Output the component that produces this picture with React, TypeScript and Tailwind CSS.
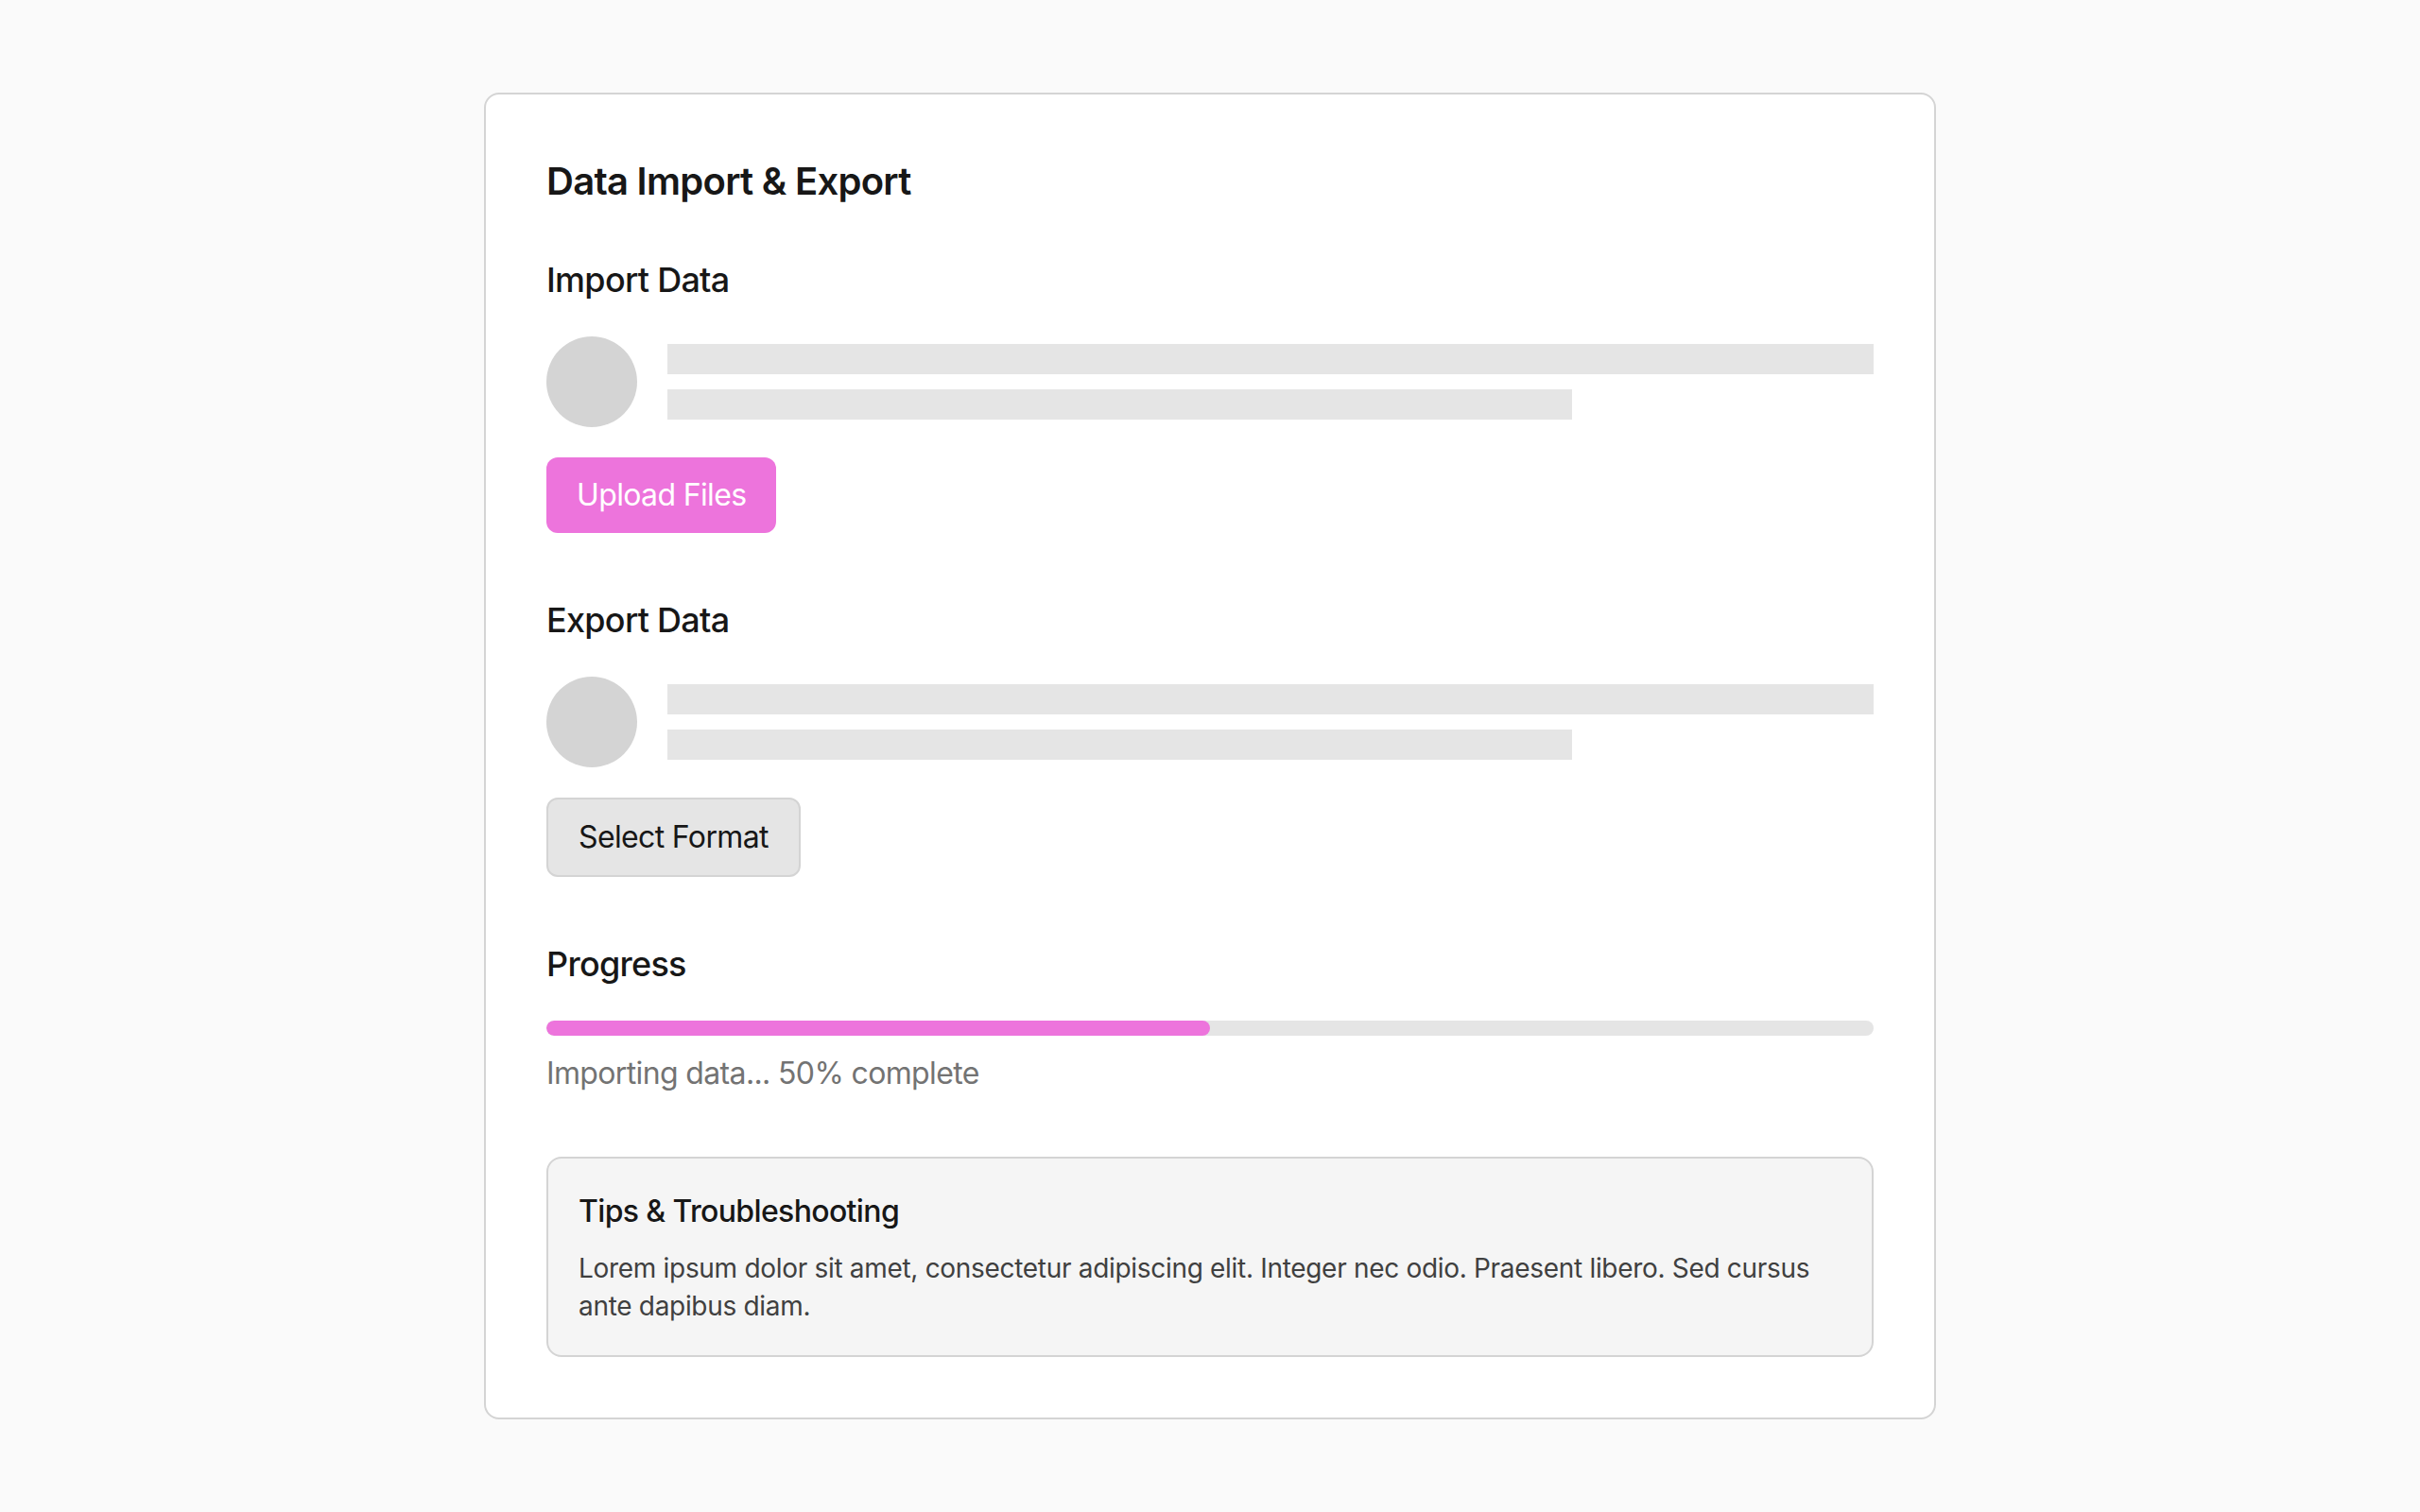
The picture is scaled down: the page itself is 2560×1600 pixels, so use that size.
import React from "react";

function Skeleton() {
  return (
    <div className="flex items-center gap-[32px]">
      <div className="h-[96px] w-[96px] shrink-0 rounded-full bg-[#d4d4d4]" />
      <div className="flex flex-1 flex-col gap-[16px]">
        <div className="h-[32px] w-full bg-[#e5e5e5]" />
        <div className="h-[32px] w-3/4 bg-[#e5e5e5]" />
      </div>
    </div>
  );
}

export default function App() {
  const progress = 50;
  return (
    <div className="min-h-screen bg-[#fafafa] pt-[98px] pb-[96px] font-['Inter',sans-serif] text-[#171717]">
      <div className="mx-auto w-[1536px] rounded-[16px] border-2 border-[#d4d4d4] bg-white p-[64px]">
        <h1 className="mb-[48px] text-[40px] leading-[56px] font-semibold tracking-[-0.018em]">Data Import &amp; Export</h1>

        <div className="flex flex-col gap-[64px]">
          <section>
            <h2 className="mb-[32px] text-[36px] leading-[56px] font-medium tracking-[-0.02em]">Import Data</h2>
            <Skeleton />
            <button className="mt-[32px] rounded-[12px] bg-[#ed74dc] px-[32px] py-[16px] text-[32px] leading-[48px] tracking-[-0.02em] text-white">
              Upload Files
            </button>
          </section>

          <section>
            <h2 className="mb-[32px] text-[36px] leading-[56px] font-medium tracking-[-0.02em]">Export Data</h2>
            <Skeleton />
            <button className="mt-[32px] rounded-[12px] border-2 border-[#d4d4d4] bg-[#e5e5e5] px-[32px] py-[16px] text-[32px] leading-[48px] tracking-[-0.02em] text-[#171717]">
              Select Format
            </button>
          </section>

          <section>
            <h2 className="mb-[32px] text-[36px] leading-[56px] font-medium tracking-[-0.02em]">Progress</h2>
            <div className="h-[16px] w-full overflow-hidden rounded-full bg-[#e5e5e5]">
              <div className="h-full rounded-full bg-[#ed74dc]" style={{ width: `${progress}%` }} />
            </div>
            <p className="mt-[16px] text-[32px] leading-[48px] tracking-[-0.02em] text-[#737373]">Importing data... {progress}% complete</p>
          </section>
        </div>

        <div className="mt-[64px] rounded-[16px] border-2 border-[#d4d4d4] bg-[#f5f5f5] p-[32px]">
          <h3 className="text-[32px] leading-[48px] font-medium tracking-[-0.02em]">Tips &amp; Troubleshooting</h3>
          <p className="mt-[16px] text-[28px] leading-[40px] tracking-[-0.011em] text-[#404040]">
            Lorem ipsum dolor sit amet, consectetur adipiscing elit. Integer nec odio. Praesent libero. Sed cursus ante dapibus diam.
          </p>
        </div>
      </div>
    </div>
  );
}
